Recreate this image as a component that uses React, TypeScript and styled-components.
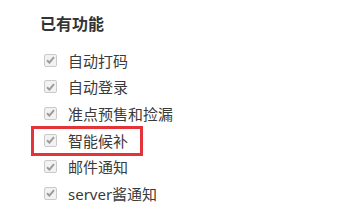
import React from "react";
import styled, { createGlobalStyle } from "styled-components";

const GlobalStyle = createGlobalStyle`
  html, body {
    margin: 0;
    padding: 0;
    background: #fff;
  }
  body {
    font-family: "Noto Sans", "Noto Sans CJK SC", sans-serif;
    color: #333;
  }
`;

const Panel = styled.section`
  padding: 12px 0 0 40px;
`;

const Title = styled.h3`
  margin: 0;
  font-size: 16px;
  line-height: 25px;
  font-weight: bold;
  color: #333;
`;

const List = styled.ul`
  list-style: none;
  margin: 10px 0 0;
  padding: 0;
`;

const Row = styled.li<{ $highlight?: boolean }>`
  position: relative;
  display: flex;
  align-items: center;
  width: fit-content;
  height: 26.6px;
  padding-left: 4px;
  font-size: 15px;
  color: #3a3a3a;

  ${(p) =>
    p.$highlight
      ? `
    &::after {
      content: "";
      position: absolute;
      top: -1px;
      bottom: -3px;
      left: -9px;
      right: -15px;
      border: 3px solid #e3343a;
      pointer-events: none;
    }
  `
      : ""}
`;

const Box = styled.span`
  display: inline-flex;
  align-items: center;
  justify-content: center;
  box-sizing: border-box;
  width: 13px;
  height: 13px;
  margin-right: 11px;
  border: 1px solid #cacaca;
  border-radius: 2px;
  background: #f2f2f2;
`;

const features = [
  "自动打码",
  "自动登录",
  "准点预售和捡漏",
  "智能候补",
  "邮件通知",
  "server酱通知",
];

function CheckMark() {
  return (
    <Box>
      <svg width="9" height="8" viewBox="0 0 9 8">
        <path
          d="M1 4.2 L3.4 6.6 L8 1.2"
          fill="none"
          stroke="#9b9b9b"
          strokeWidth="2"
        />
      </svg>
    </Box>
  );
}

export default function App() {
  return (
    <>
      <GlobalStyle />
      <Panel>
        <Title>已有功能</Title>
        <List>
          {features.map((f) => (
            <Row key={f} $highlight={f === "智能候补"}>
              <CheckMark />
              {f}
            </Row>
          ))}
        </List>
      </Panel>
    </>
  );
}
